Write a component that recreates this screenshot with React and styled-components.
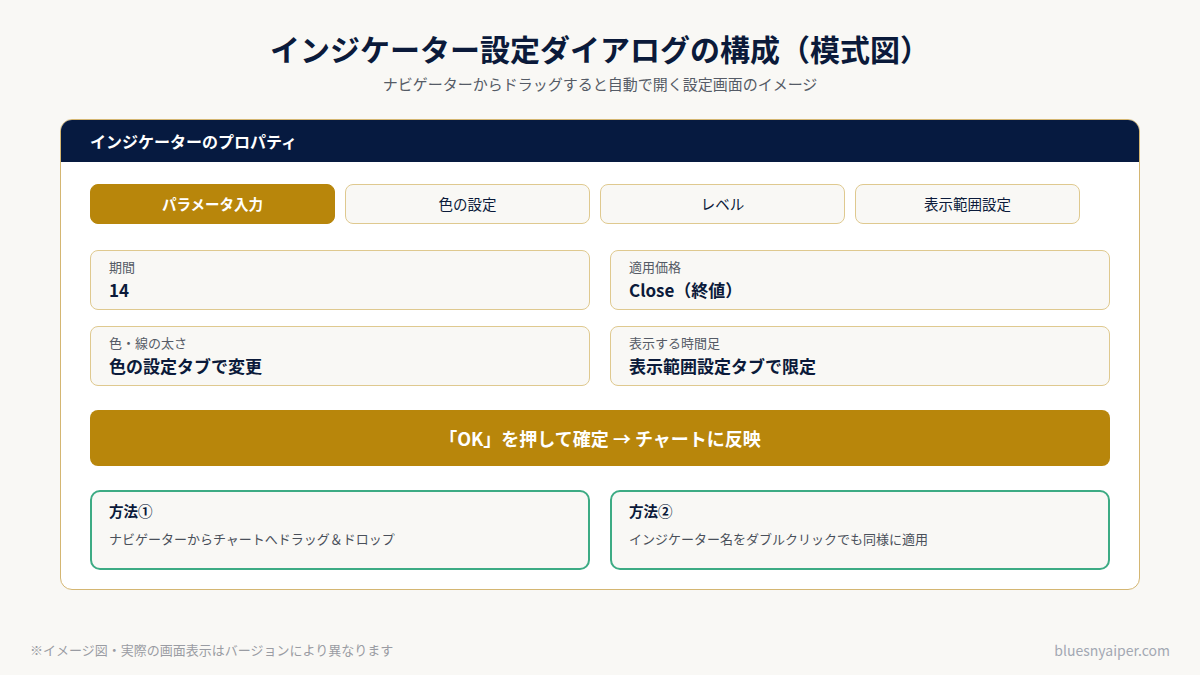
import React from 'react';
import styled, { createGlobalStyle } from 'styled-components';

const GlobalStyle = createGlobalStyle`
   html, body {
      margin: 0;
      padding: 0;
      background: #f9f8f5;
   }
   body {
      font-family: "Noto Sans CJK JP", "Noto Sans", sans-serif;
      color: #0b1a3a;
   }
`;

const tabs = ['パラメータ入力', '色の設定', 'レベル', '表示範囲設定'];

const fields = [
   { label: '期間', value: '14' },
   { label: '適用価格', value: 'Close（終値）' },
   { label: '色・線の太さ', value: '色の設定タブで変更' },
   { label: '表示する時間足', value: '表示範囲設定タブで限定' },
];

const methods = [
   { title: '方法①', text: 'ナビゲーターからチャートへドラッグ＆ドロップ' },
   { title: '方法②', text: 'インジケーター名をダブルクリックでも同様に適用' },
];

const App = () => {
   return (
      <>
         <GlobalStyle />
         <Page>
            <Heading>インジケーター設定ダイアログの構成（模式図）</Heading>
            <Lead>ナビゲーターからドラッグすると自動で開く設定画面のイメージ</Lead>
            <Dialog>
               <DialogHeader>インジケーターのプロパティ</DialogHeader>
               <DialogBody>
                  <Tabs>
                     {tabs.map((t, i) => (
                        <Tab key={t} active={i === 0} last={i === tabs.length - 1}>
                           {t}
                        </Tab>
                     ))}
                  </Tabs>
                  <FieldGrid>
                     {fields.map((f) => (
                        <Field key={f.label}>
                           <FieldLabel>{f.label}</FieldLabel>
                           <FieldValue>{f.value}</FieldValue>
                        </Field>
                     ))}
                  </FieldGrid>
                  <OkBar>「OK」を押して確定 → チャートに反映</OkBar>
                  <MethodGrid>
                     {methods.map((m) => (
                        <Method key={m.title}>
                           <MethodTitle>{m.title}</MethodTitle>
                           <MethodText>{m.text}</MethodText>
                        </Method>
                     ))}
                  </MethodGrid>
               </DialogBody>
            </Dialog>
            <Footer>
               <FooterNote>※イメージ図・実際の画面表示はバージョンにより異なります</FooterNote>
               <FooterSite>bluesnyaiper.com</FooterSite>
            </Footer>
         </Page>
      </>
   );
};

const Page = styled.div`
   width: 1200px;
   height: 675px;
   box-sizing: border-box;
   padding-top: 28px;
   display: flex;
   flex-direction: column;
   align-items: center;
`;
const Heading = styled.h1`
   margin: 0;
   font-size: 30px;
   font-weight: 700;
   line-height: 40px;
   color: #0b1a3a;
`;
const Lead = styled.p`
   margin: 5px 0 0;
   font-size: 15px;
   line-height: 22px;
   color: #555b66;
`;
const Dialog = styled.div`
   margin-top: 24px;
   width: 1080px;
   box-sizing: border-box;
   background: #ffffff;
   border: 1px solid #d4b672;
   border-radius: 12px;
   overflow: hidden;
`;
const DialogHeader = styled.div`
   height: 42px;
   display: flex;
   align-items: center;
   padding-left: 29px;
   background: #061a40;
   color: #ffffff;
   font-size: 16px;
   font-weight: 700;
`;
const DialogBody = styled.div`
   padding: 22px 29px 19px;
`;
const Tabs = styled.div`
   display: flex;
   gap: 10px;
`;
const Tab = styled.div`
   width: ${(p) => (p.last ? '225px' : '245px')};
   height: 40px;
   box-sizing: border-box;
   display: flex;
   align-items: center;
   justify-content: center;
   padding-bottom: 2px;
   border-radius: 8px;
   font-size: 14.5px;
   font-weight: ${(p) => (p.active ? 700 : 400)};
   color: ${(p) => (p.active ? '#ffffff' : '#0b1a3a')};
   background: ${(p) => (p.active ? '#b8860b' : '#f9f8f5')};
   border: 1px solid ${(p) => (p.active ? '#b8860b' : '#dfc98f')};
`;
const FieldGrid = styled.div`
   margin-top: 26px;
   display: grid;
   grid-template-columns: 1fr 1fr;
   column-gap: 20px;
   row-gap: 16px;
`;
const Field = styled.div`
   height: 60px;
   box-sizing: border-box;
   padding: 7px 18px 0;
   background: #f9f8f5;
   border: 1px solid #dfc98f;
   border-radius: 8px;
`;
const FieldLabel = styled.div`
   font-size: 13px;
   line-height: 18px;
   color: #555b66;
`;
const FieldValue = styled.div`
   margin-top: 2px;
   font-size: 17px;
   font-weight: 700;
   line-height: 24px;
   color: #0b1a3a;
`;
const OkBar = styled.div`
   margin-top: 24px;
   height: 56px;
   display: flex;
   align-items: center;
   justify-content: center;
   background: #b8860b;
   border-radius: 8px;
   color: #ffffff;
   font-size: 18px;
   font-weight: 700;
`;
const MethodGrid = styled.div`
   margin-top: 24px;
   display: grid;
   grid-template-columns: 1fr 1fr;
   column-gap: 20px;
`;
const Method = styled.div`
   height: 80px;
   box-sizing: border-box;
   padding: 8px 17px 0;
   background: #f9f8f5;
   border: 2px solid #3dab84;
   border-radius: 10px;
`;
const MethodTitle = styled.div`
   font-size: 14.5px;
   font-weight: 700;
   line-height: 22px;
   color: #0b1a3a;
`;
const MethodText = styled.div`
   margin-top: 8px;
   font-size: 13px;
   line-height: 18px;
   color: #4a505a;
`;
const Footer = styled.div`
   margin-top: auto;
   width: 100%;
   box-sizing: border-box;
   padding: 0 30px 16px;
   display: flex;
   justify-content: space-between;
   align-items: center;
   line-height: 18px;
   color: #9a9ca3;
`;
const FooterNote = styled.span`
   font-size: 13px;
`;
const FooterSite = styled.span`
   font-size: 14px;
   color: #a3a8b3;
`;

export default App;
